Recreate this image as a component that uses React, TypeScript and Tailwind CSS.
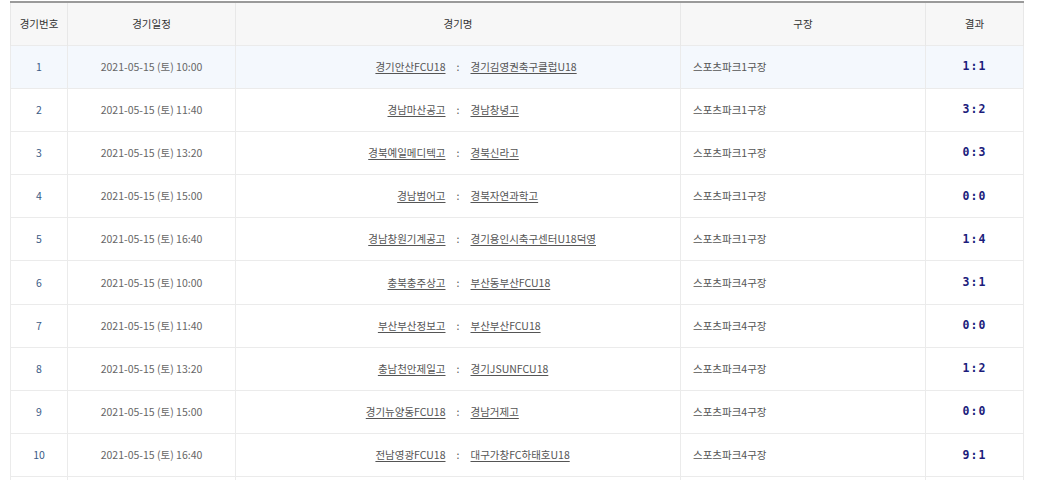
import React from "react";

type Match = {
  no: number;
  date: string;
  home: string;
  away: string;
  venue: string;
  score: string;
};

const matches: Match[] = [
  { no: 1, date: "2021-05-15 (토) 10:00", home: "경기안산FCU18", away: "경기김영권축구클럽U18", venue: "스포츠파크1구장", score: "1:1" },
  { no: 2, date: "2021-05-15 (토) 11:40", home: "경남마산공고", away: "경남창녕고", venue: "스포츠파크1구장", score: "3:2" },
  { no: 3, date: "2021-05-15 (토) 13:20", home: "경북예일메디텍고", away: "경북신라고", venue: "스포츠파크1구장", score: "0:3" },
  { no: 4, date: "2021-05-15 (토) 15:00", home: "경남범어고", away: "경북자연과학고", venue: "스포츠파크1구장", score: "0:0" },
  { no: 5, date: "2021-05-15 (토) 16:40", home: "경남창원기계공고", away: "경기용인시축구센터U18덕영", venue: "스포츠파크1구장", score: "1:4" },
  { no: 6, date: "2021-05-15 (토) 10:00", home: "충북충주상고", away: "부산동부산FCU18", venue: "스포츠파크4구장", score: "3:1" },
  { no: 7, date: "2021-05-15 (토) 11:40", home: "부산부산정보고", away: "부산부산FCU18", venue: "스포츠파크4구장", score: "0:0" },
  { no: 8, date: "2021-05-15 (토) 13:20", home: "충남천안제일고", away: "경기JSUNFCU18", venue: "스포츠파크4구장", score: "1:2" },
  { no: 9, date: "2021-05-15 (토) 15:00", home: "경기뉴양동FCU18", away: "경남거제고", venue: "스포츠파크4구장", score: "0:0" },
  { no: 10, date: "2021-05-15 (토) 16:40", home: "전남영광FCU18", away: "대구가창FC하태호U18", venue: "스포츠파크4구장", score: "9:1" },
];

export default function App() {
  return (
    <div className="h-[480px] overflow-hidden bg-white pl-[10px] pt-[1px] font-['Noto_Sans_CJK_KR',sans-serif]">
      <table className="w-[1013px] table-fixed border-collapse border-t-2 border-t-[#9a9a9a] text-[10.5px]">
        <colgroup>
          <col className="w-[57px]" />
          <col className="w-[168px]" />
          <col className="w-[445px]" />
          <col className="w-[245px]" />
          <col className="w-[98px]" />
        </colgroup>
        <thead>
          <tr className="h-[43px] bg-[#f7f7f7] text-[#333]">
            <th className="border-x border-[#e8e8e8] font-normal">경기번호</th>
            <th className="border-x border-[#e8e8e8] font-normal">경기일정</th>
            <th className="border-x border-[#e8e8e8] font-normal">경기명</th>
            <th className="border-x border-[#e8e8e8] font-normal">구장</th>
            <th className="border-x border-[#e8e8e8] font-normal">결과</th>
          </tr>
        </thead>
        <tbody>
          {matches.map((m, i) => (
            <tr key={m.no} className={i === 0 ? "h-[43.2px] bg-[#f4f8fd]" : "h-[43.2px] bg-white"}>
              <td className="border border-[#ebebeb] text-center text-[#3b5b86]">{m.no}</td>
              <td className="border border-[#ebebeb] text-center text-[#666]">{m.date}</td>
              <td className="border border-[#ebebeb] text-[#555]">
                <div className="flex items-center">
                  <span className="flex-1 text-right underline underline-offset-2">{m.home}</span>
                  <span className="w-[25px] text-center">:</span>
                  <span className="flex-1 text-left underline underline-offset-2">{m.away}</span>
                </div>
              </td>
              <td className="border border-[#ebebeb] pl-3 text-left text-[#555]">{m.venue}</td>
              <td className="border border-[#ebebeb] text-center font-['DejaVu_Sans_Mono',monospace] text-[11.5px] font-bold tracking-[1px] text-[#1c1c7c]">
                {m.score}
              </td>
            </tr>
          ))}
          {/* next row, cut off by the frame */}
          <tr className="h-[43.2px]">
            <td className="border border-[#ebebeb]" />
            <td className="border border-[#ebebeb]" />
            <td className="border border-[#ebebeb]" />
            <td className="border border-[#ebebeb]" />
            <td className="border border-[#ebebeb]" />
          </tr>
        </tbody>
      </table>
    </div>
  );
}
